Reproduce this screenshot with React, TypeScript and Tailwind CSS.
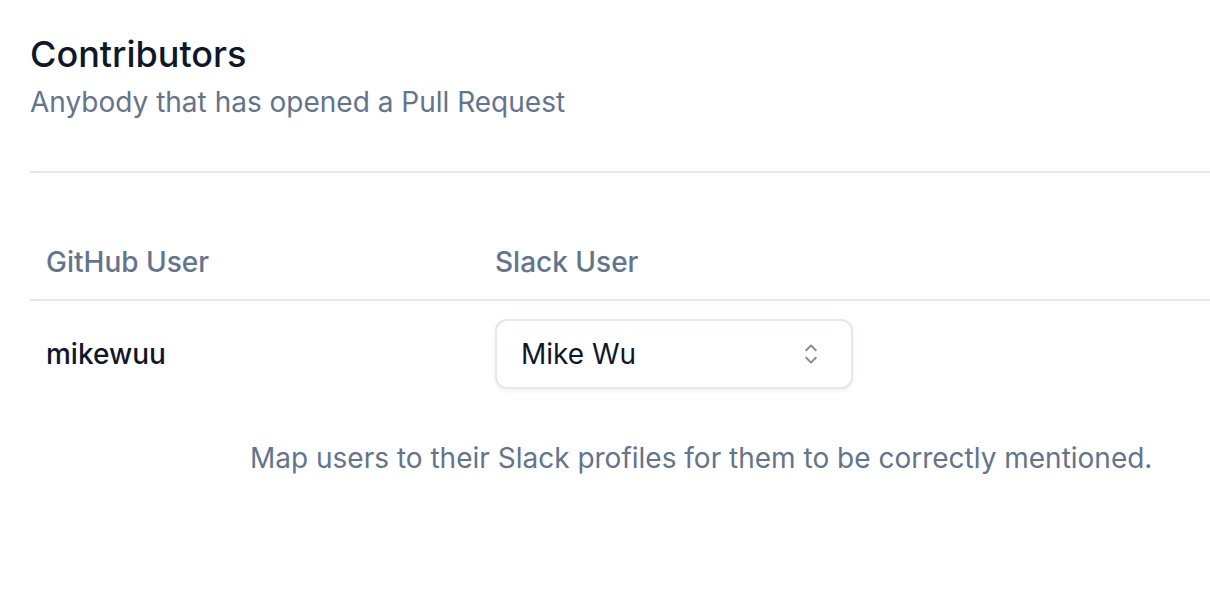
import { RxCaretSort } from "react-icons/rx";

const contributors = [{ github: "mikewuu", slack: "Mike Wu" }];

export default function App() {
    return (
        <div className="min-h-screen overflow-hidden bg-white font-['Inter',sans-serif] text-[#0f172a]">
            <div className="pl-[30px] pt-[34px]">
                <h2 className="text-[36px] font-medium leading-[40px]">Contributors</h2>
                <p className="mt-[8px] text-[28px] leading-[40px] text-[#64748b]">
                    Anybody that has opened a Pull Request
                </p>

                <div className="mt-[49px] h-[2px] bg-[#e2e8f0]" />

                <div className="mt-[32px] flex h-[96px] items-center border-b-2 border-[#e2e8f0] pt-[20px] text-[28px] font-medium text-[#64748b]">
                    <div className="w-[449px] px-4">GitHub User</div>
                    <div className="px-4">Slack User</div>
                </div>

                {contributors.map((c) => (
                    <div key={c.github} className="flex items-center py-[18px]">
                        <div className="w-[449px] px-4 text-[28px] font-medium">{c.github}</div>
                        <div className="px-4">
                            <button
                                type="button"
                                className="flex h-[70px] w-[358px] items-center justify-between rounded-[12px] border-2 border-[#e2e8f0] bg-white pl-6 pr-[24px] text-[28px] shadow-[0_2px_4px_rgba(15,23,42,0.06)]"
                            >
                                <span>{c.slack}</span>
                                <RxCaretSort className="size-[32px] text-[#0f172a] opacity-50" aria-hidden="true" />
                            </button>
                        </div>
                    </div>
                ))}

                <p className="ml-[220px] mt-[31px] text-[28px] leading-[40px] text-[#64748b]">
                    Map users to their Slack profiles for them to be correctly mentioned.
                </p>
            </div>
        </div>
    );
}
